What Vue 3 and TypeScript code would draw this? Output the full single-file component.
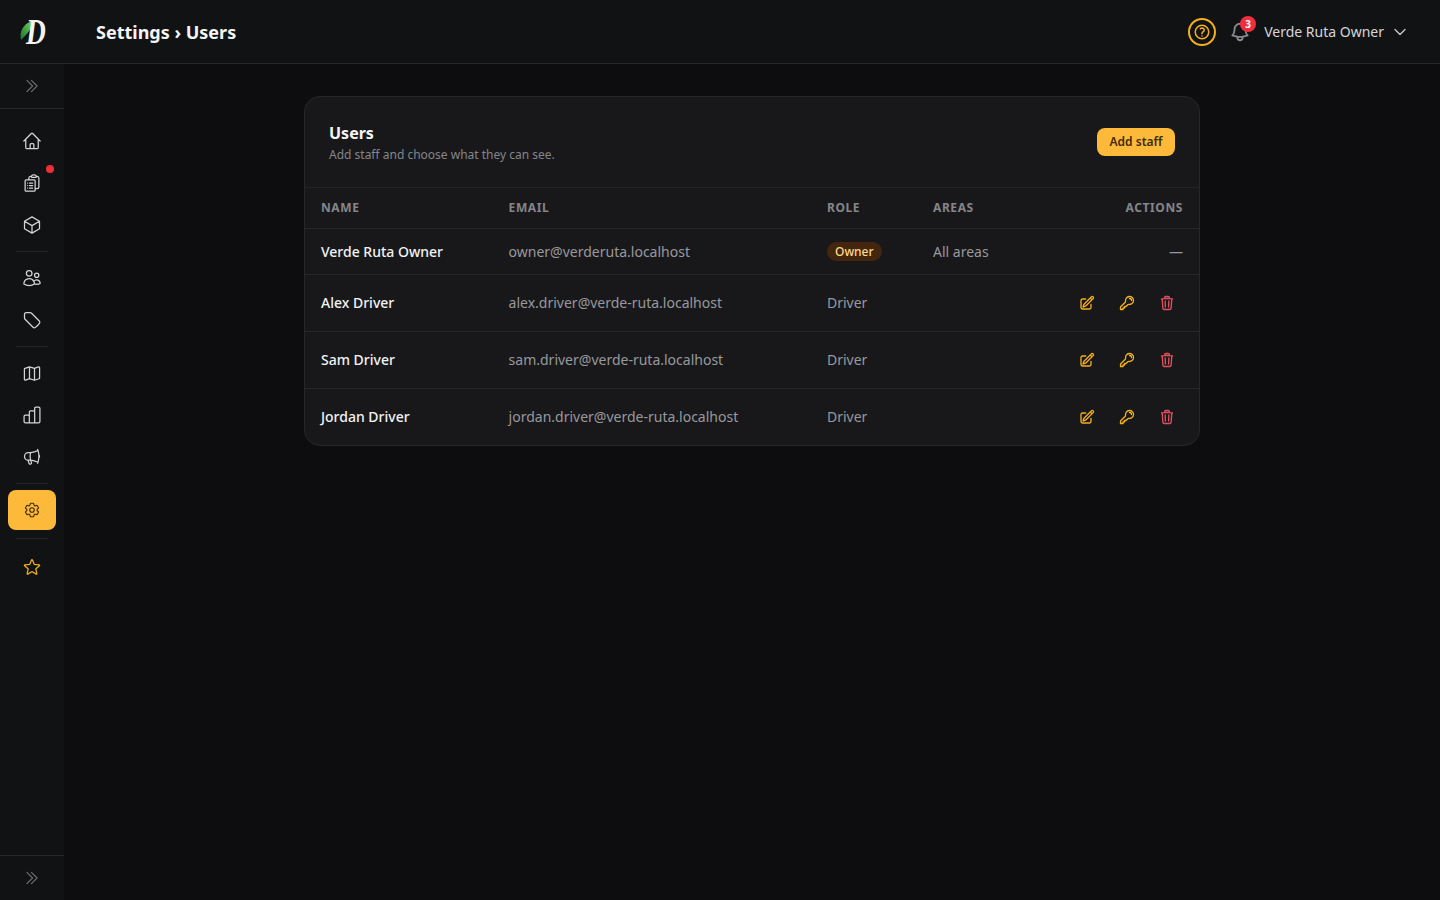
<script setup lang="ts">
const P = {
  home: 'm2.25 12 8.954-8.955c.44-.439 1.152-.439 1.591 0L21.75 12M4.5 9.75v10.125c0 .621.504 1.125 1.125 1.125H9.75v-4.875c0-.621.504-1.125 1.125-1.125h2.25c.621 0 1.125.504 1.125 1.125V21h4.125c.621 0 1.125-.504 1.125-1.125V9.75M8.25 21h8.25',
  clip: 'M9 12h3.75M9 15h3.75M9 18h3.75m3 .75H18a2.25 2.25 0 0 0 2.25-2.25V6.108c0-1.135-.845-2.098-1.976-2.192a48.424 48.424 0 0 0-1.123-.08m-5.801 0c-.065.21-.1.433-.1.664 0 .414.336.75.75.75h4.5a.75.75 0 0 0 .75-.75 2.25 2.25 0 0 0-.1-.664m-5.8 0A2.251 2.251 0 0 1 13.5 2.25H15c1.012 0 1.867.668 2.15 1.586m-5.8 0c-.376.023-.75.05-1.124.08C9.095 4.01 8.25 4.973 8.25 6.108V8.25m0 0H4.875c-.621 0-1.125.504-1.125 1.125v11.25c0 .621.504 1.125 1.125 1.125h9.75c.621 0 1.125-.504 1.125-1.125V9.375c0-.621-.504-1.125-1.125-1.125H8.25ZM6.75 12h.008v.008H6.75V12Zm0 3h.008v.008H6.75V15Zm0 3h.008v.008H6.75V18Z',
  cube: 'm21 7.5-9-5.25L3 7.5m18 0-9 5.25m9-5.25v9l-9 5.25M3 7.5l9 5.25M3 7.5v9l9 5.25m0-9v9',
  users: 'M15 19.128a9.38 9.38 0 0 0 2.625.372 9.337 9.337 0 0 0 4.121-.952 4.125 4.125 0 0 0-7.533-2.493M15 19.128v-.003c0-1.113-.285-2.16-.786-3.07M15 19.128v.106A12.318 12.318 0 0 1 8.624 21c-2.331 0-4.512-.645-6.374-1.766l-.001-.109a6.375 6.375 0 0 1 11.964-3.07M12 6.375a3.375 3.375 0 1 1-6.75 0 3.375 3.375 0 0 1 6.75 0Zm8.25 2.25a2.625 2.625 0 1 1-5.25 0 2.625 2.625 0 0 1 5.25 0Z',
  tag: 'M9.568 3H5.25A2.25 2.25 0 0 0 3 5.25v4.318c0 .597.237 1.17.659 1.591l9.581 9.581c.699.699 1.78.872 2.607.33a18.095 18.095 0 0 0 5.223-5.223c.542-.827.369-1.908-.33-2.607L11.16 3.66A2.25 2.25 0 0 0 9.568 3Z',
  map: 'M9 4.6 3.6 6.4a1 1 0 0 0-.7.95V19.6a1 1 0 0 0 1.35.94L9 18.8l6 1.9 5.4-1.8a1 1 0 0 0 .7-.95V5.6a1 1 0 0 0-1.35-.94L15 6.4ZM9 4.6v14.2M15 6.4v14.3',
  chart: 'M8.8 21.4H4a1.5 1.5 0 0 1-1.5-1.5v-6.4A1.5 1.5 0 0 1 4 12h3.3a1.5 1.5 0 0 1 1.5 1.5ZM8.8 21.4V8.6a1.5 1.5 0 0 1 1.5-1.5h3.4a1.5 1.5 0 0 1 1.5 1.5v12.8ZM15.2 21.4V4a1.5 1.5 0 0 1 1.5-1.5H20A1.5 1.5 0 0 1 21.5 4v15.9a1.5 1.5 0 0 1-1.5 1.5Z',
  mega: 'M10.34 15.84c-.688-.06-1.386-.09-2.09-.09H7.5a4.5 4.5 0 1 1 0-9h.75c.704 0 1.402-.03 2.09-.09m0 9.18c.253.962.584 1.892.985 2.783.247.55.06 1.21-.463 1.511l-.657.38c-.551.318-1.26.117-1.527-.461a20.845 20.845 0 0 1-1.44-4.282m3.102.069a18.03 18.03 0 0 1-.59-4.59c0-1.586.205-3.124.59-4.59m0 9.18a23.848 23.848 0 0 1 8.835 2.535M10.34 6.66a23.847 23.847 0 0 0 8.835-2.535m0 0A23.74 23.74 0 0 0 18.795 3m.38 1.125a23.91 23.91 0 0 1 1.014 5.395m-1.014 8.855c-.118.38-.245.754-.38 1.125m.38-1.125a23.91 23.91 0 0 0 1.014-5.395m0-3.46c.495.413.811 1.035.811 1.73 0 .695-.316 1.317-.811 1.73m0-3.46a24.347 24.347 0 0 1 0 3.46',
  cog: 'M9.594 3.94c.09-.542.56-.94 1.11-.94h2.593c.55 0 1.02.398 1.11.94l.213 1.281c.063.374.313.686.645.87.074.04.147.083.22.127.325.196.72.257 1.075.124l1.217-.456a1.125 1.125 0 0 1 1.37.49l1.296 2.247a1.125 1.125 0 0 1-.26 1.431l-1.003.827c-.293.241-.438.613-.43.992a7.723 7.723 0 0 1 0 .255c-.008.378.137.75.43.991l1.004.827c.424.35.534.955.26 1.43l-1.298 2.247a1.125 1.125 0 0 1-1.369.491l-1.217-.456c-.355-.133-.75-.072-1.076.124a6.47 6.47 0 0 1-.22.128c-.331.183-.581.495-.644.869l-.213 1.281c-.09.543-.56.94-1.11.94h-2.594c-.55 0-1.019-.398-1.11-.94l-.213-1.281c-.062-.374-.312-.686-.644-.87a6.52 6.52 0 0 1-.22-.127c-.325-.196-.72-.257-1.076-.124l-1.217.456a1.125 1.125 0 0 1-1.369-.49l-1.297-2.247a1.125 1.125 0 0 1 .26-1.431l1.004-.827c.292-.24.437-.613.43-.991a6.932 6.932 0 0 1 0-.255c.007-.38-.138-.751-.43-.992l-1.004-.827a1.125 1.125 0 0 1-.26-1.43l1.297-2.247a1.125 1.125 0 0 1 1.37-.491l1.216.456c.356.133.751.072 1.076-.124.072-.044.146-.086.22-.128.332-.183.582-.495.644-.869l.214-1.28Z M15 12a3 3 0 1 1-6 0 3 3 0 0 1 6 0Z',
  star: 'M11.48 3.499a.562.562 0 0 1 1.04 0l2.125 5.111a.563.563 0 0 0 .475.345l5.518.442c.499.04.701.663.321.988l-4.204 3.602a.563.563 0 0 0-.182.557l1.285 5.385a.562.562 0 0 1-.84.61l-4.725-2.885a.562.562 0 0 0-.586 0L6.982 20.54a.562.562 0 0 1-.84-.61l1.285-5.386a.562.562 0 0 0-.182-.557l-4.204-3.602a.562.562 0 0 1 .321-.988l5.518-.442a.563.563 0 0 0 .475-.345L11.48 3.5Z',
  dbl: 'm5.25 4.5 7.5 7.5-7.5 7.5m6-15 7.5 7.5-7.5 7.5',
  edit: 'm16.862 4.487 1.687-1.688a1.875 1.875 0 1 1 2.652 2.652L10.582 16.07a4.5 4.5 0 0 1-1.897 1.13L6 18l.8-2.685a4.5 4.5 0 0 1 1.13-1.897l8.932-8.931Zm0 0L19.5 7.125M18 14v4.75A2.25 2.25 0 0 1 15.75 21H5.25A2.25 2.25 0 0 1 3 18.75V8.25A2.25 2.25 0 0 1 5.25 6H10',
  key: 'M15.75 5.25a3 3 0 0 1 3 3m3 0a6 6 0 0 1-7.029 5.912c-.563-.097-1.159.026-1.563.43L10.5 17.25H8.25v2.25H6v2.25H2.25v-2.818c0-.597.237-1.17.659-1.591l6.499-6.499c.404-.404.527-1 .43-1.563A6 6 0 1 1 21.75 8.25Z',
  trash: 'm14.74 9-.346 9m-4.788 0L9.26 9m9.968-3.21c.342.052.682.107 1.022.166m-1.022-.165L18.16 19.673a2.25 2.25 0 0 1-2.244 2.077H8.084a2.25 2.25 0 0 1-2.244-2.077L4.772 5.79m14.456 0a48.108 48.108 0 0 0-3.478-.397m-12 .562c.34-.059.68-.114 1.022-.165m0 0a48.11 48.11 0 0 1 3.478-.397m7.5 0v-.916c0-1.18-.91-2.164-2.09-2.201a51.964 51.964 0 0 0-3.32 0c-1.18.037-2.09 1.022-2.09 2.201v.916m7.5 0a48.667 48.667 0 0 0-7.5 0',
  bell: 'M14.857 17.082a23.848 23.848 0 0 0 5.454-1.31A8.967 8.967 0 0 1 18 9.75V9A6 6 0 0 0 6 9v.75a8.967 8.967 0 0 1-2.312 6.022c1.733.64 3.56 1.085 5.455 1.31m5.714 0a24.255 24.255 0 0 1-5.714 0m5.714 0a3 3 0 1 1-5.714 0',
  down: 'm19.5 8.25-7.5 7.5-7.5-7.5',
  help: 'M9.879 7.519c1.171-1.025 3.071-1.025 4.242 0 1.172 1.025 1.172 2.687 0 3.712-.203.179-.43.326-.67.442-.745.361-1.45.999-1.45 1.827v.75M21 12a9 9 0 1 1-18 0 9 9 0 0 1 18 0Zm-9 5.25h.008v.008H12v-.008Z'
}
const drivers = [
  { name: 'Alex Driver', email: 'alex.driver@verde-ruta.localhost' },
  { name: 'Sam Driver', email: 'sam.driver@verde-ruta.localhost' },
  { name: 'Jordan Driver', email: 'jordan.driver@verde-ruta.localhost' }
]
const groups = [
  [{ d: P.home }, { d: P.clip, dot: true }, { d: P.cube }],
  [{ d: P.users }, { d: P.tag }],
  [{ d: P.map }, { d: P.chart }, { d: P.mega }]
]
</script>

<template>
  <div class="app">
    <aside class="side">
      <div class="logo">
        <svg class="leaf" viewBox="0 0 14 22" width="14" height="22">
          <defs>
            <linearGradient id="leafg" x1="1" y1="0" x2="0" y2="1">
              <stop offset="0" stop-color="#7ed957" />
              <stop offset="1" stop-color="#14722f" />
            </linearGradient>
          </defs>
          <path d="M1 20C-1 11 4 3 13 1c-1 4-1.500 7-4 10-2 3-5 6-8 9Z" fill="url(#leafg)" />
        </svg>
        <span class="logo-d">D</span>
      </div>
      <div class="toggle">
        <svg class="ic18 muted" viewBox="0 0 24 24"><path :d="P.dbl" /></svg>
      </div>
      <nav class="nav">
        <template v-for="(g, i) in groups" :key="i">
          <div class="group">
            <a v-for="(it, j) in g" :key="j" class="item">
              <svg class="ic20" viewBox="0 0 24 24"><path :d="it.d" /></svg>
              <span v-if="it.dot" class="dot"></span>
            </a>
          </div>
          <div class="sep"></div>
        </template>
        <a class="active">
          <svg class="ic18" viewBox="0 0 24 24"><path :d="P.cog" /></svg>
        </a>
        <div class="sep sep2"></div>
        <a class="item star">
          <svg class="ic20" viewBox="0 0 24 24"><path :d="P.star" /></svg>
        </a>
      </nav>
      <div class="side-foot">
        <svg class="ic18 muted" viewBox="0 0 24 24"><path :d="P.dbl" /></svg>
      </div>
    </aside>
    <div class="right">
      <header class="top">
        <h1>Settings › Users</h1>
        <div class="top-r">
          <span class="help">
            <svg class="ic18 bold" viewBox="0 0 24 24"><path :d="P.help" /></svg>
          </span>
          <span class="bell">
            <svg class="ic22 bold" viewBox="0 0 24 24"><path :d="P.bell" /></svg>
            <span class="badge">3</span>
          </span>
          <span class="uname">Verde Ruta Owner</span>
          <svg class="ic16 chev bold" viewBox="0 0 24 24"><path :d="P.down" /></svg>
        </div>
      </header>
      <main class="main">
        <section class="card">
          <div class="card-h">
            <div class="titles">
              <h2>Users</h2>
              <p>Add staff and choose what they can see.</p>
            </div>
            <button class="add">Add staff</button>
          </div>
          <table>
            <colgroup>
              <col class="c1" />
              <col class="c2" />
              <col class="c3" />
              <col />
              <col />
            </colgroup>
            <thead>
              <tr>
                <th>NAME</th>
                <th>EMAIL</th>
                <th>ROLE</th>
                <th>AREAS</th>
                <th class="r">ACTIONS</th>
              </tr>
            </thead>
            <tbody>
              <tr class="owner">
                <td class="name">Verde Ruta Owner</td>
                <td>owner@verderuta.localhost</td>
                <td><span class="pill">Owner</span></td>
                <td>All areas</td>
                <td class="r">—</td>
              </tr>
              <tr v-for="d in drivers" :key="d.email" class="driver">
                <td class="name">{{ d.name }}</td>
                <td>{{ d.email }}</td>
                <td>Driver</td>
                <td></td>
                <td class="r">
                  <div class="acts">
                    <svg class="ic16 amber bold" viewBox="0 0 24 24"><path :d="P.edit" /></svg>
                    <svg class="ic16 amber bold" viewBox="0 0 24 24"><path :d="P.key" /></svg>
                    <svg class="ic16 red bold" viewBox="0 0 24 24"><path :d="P.trash" /></svg>
                  </div>
                </td>
              </tr>
            </tbody>
          </table>
        </section>
      </main>
    </div>
  </div>
</template>

<style>
html, body { margin: 0; background: #0d0d0f; }
</style>

<style scoped>
.app { display: flex; height: 900px; font-family: "Noto Sans", sans-serif; background: #0d0d0f; color: #fff; overflow: hidden; }
svg { fill: none; stroke: currentColor; stroke-width: 1.5; stroke-linecap: round; stroke-linejoin: round; display: block; }
svg.bold { stroke-width: 2; }
.ic16 { width: 16px; height: 16px; }
.ic18 { width: 18px; height: 18px; }
.ic20 { width: 20px; height: 20px; }
.ic22 { width: 22px; height: 22px; }
.muted { color: #6f6f74; }

.side { width: 64px; flex: none; background: #111214; display: flex; flex-direction: column; }
.logo { position: relative; height: 63px; border-bottom: 1px solid #27282b; }
.leaf { position: absolute; left: 20px; top: 20px; stroke: none; }
.logo-d { position: absolute; left: 26px; top: 12px; font: italic 700 36px/40px "Liberation Serif", serif; color: #f4f4f4; transform: scaleX(0.76); transform-origin: left center; }
.toggle { height: 44px; border-bottom: 1px solid #27282b; display: flex; align-items: center; justify-content: center; }
.nav { flex: 1; display: flex; flex-direction: column; align-items: center; padding-top: 12px; }
.group { display: flex; flex-direction: column; align-items: center; gap: 2px; width: 100%; }
.item { position: relative; width: 48px; height: 40px; display: flex; align-items: center; justify-content: center; color: #d4d4d6; }
.dot { position: absolute; width: 8px; height: 8px; border-radius: 50%; background: #ef2f36; left: 38px; top: 2px; }
.sep { width: 32px; height: 1px; background: #232427; margin: 6px 0; }
.active { width: 48px; height: 40px; border-radius: 8px; background: #fdb93a; color: #3f2a08; display: flex; align-items: center; justify-content: center; }
.sep2 { margin: 8px 0; }
.star { color: #f2b01e; }
.side-foot { height: 44px; border-top: 1px solid #27282b; display: flex; align-items: center; justify-content: center; }

.right { flex: 1; min-width: 0; display: flex; flex-direction: column; }
.top { height: 63px; flex: none; background: #111214; border-bottom: 1px solid #27282b; display: flex; align-items: center; justify-content: space-between; padding: 0 32px; }
h1 { margin: 0; font-size: 18px; font-weight: 700; color: #f5f5f5; }
.top-r { display: flex; align-items: center; }
.help { width: 24px; height: 24px; border: 2px solid #f2b01e; border-radius: 50%; display: flex; align-items: center; justify-content: center; color: #f2b01e; }
.bell { position: relative; margin-left: 13px; color: #8a8a8e; }
.badge { position: absolute; left: 11px; top: -5px; width: 16px; height: 16px; border-radius: 50%; background: #ef2f3c; color: #fff; font-size: 10px; font-weight: 700; line-height: 16px; text-align: center; }
.uname { margin-left: 13px; font-size: 14px; color: #d6d6d8; }
.chev { margin-left: 8px; color: #c9c9cc; }

.main { flex: 1; padding: 32px 240px 0; }
.card { width: 896px; box-sizing: border-box; background: #18181b; border: 1px solid #27272a; border-radius: 16px; overflow: hidden; }
.card-h { height: 91px; box-sizing: border-box; padding: 0 24px; display: flex; align-items: center; justify-content: space-between; border-bottom: 1px solid #232326; }
.titles { padding-top: 2px; }
h2 { margin: 0; font-size: 16px; font-weight: 700; line-height: 22px; color: #f5f5f5; }
.card-h p { margin: 1px 0 0; font-size: 12px; line-height: 20px; color: #85858a; }
.add { height: 28px; width: 78px; padding: 0 0 2px; border: 0; border-radius: 8px; background: #fdb93a; color: #3f2a08; font: 600 12px "Noto Sans", sans-serif; }
table { width: 100%; border-collapse: collapse; table-layout: fixed; font-size: 14px; }
.c1 { width: 187.6px; }
.c2 { width: 318.4px; }
.c3 { width: 106px; }
th { height: 39px; padding: 0 16px 1px; text-align: left; font-size: 12px; font-weight: 700; letter-spacing: 0.6px; color: #85858a; border-bottom: 1px solid #27272a; }
td { padding: 0 16px; color: #98989d; border-bottom: 1px solid #27272a; white-space: nowrap; }
.r { text-align: right; }
tr:last-child td { border-bottom: 0; }
.owner td { height: 45px; }
.driver td { height: 55px; padding-bottom: 1px; }
.driver td.r { height: 56px; padding-bottom: 0; }
.name { font-weight: 500; color: #f2f2f3; }
.pill { display: inline-block; height: 19px; line-height: 19px; padding: 0 8px; border-radius: 10px; background: #44260f; color: #fcd98a; font-size: 12px; font-weight: 500; vertical-align: 1px; }
.acts { display: flex; justify-content: flex-end; gap: 24px; margin-right: -8px; margin-left: -40px; padding-right: 16px; }
.amber { color: #f2b01e; }
.red { color: #e0505e; }
</style>
